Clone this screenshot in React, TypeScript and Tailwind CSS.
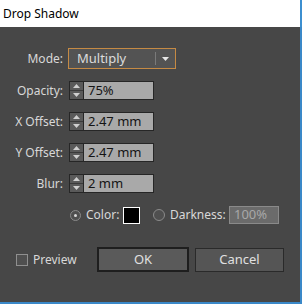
import React from 'react';

const font = { fontFamily: '"Segoe UI", "Noto Sans", "DejaVu Sans", sans-serif' };

function Spinner() {
  return (
    <div className="w-[15px] h-full flex flex-col border border-[#262626] bg-[#5a5a5a]">
      <div className="flex-1 flex items-center justify-center border-b border-[#3a3a3a]">
        <svg width="7" height="4" viewBox="0 0 7 4"><path d="M0 4 L3.5 0 L7 4 Z" fill="#cfcfcf" /></svg>
      </div>
      <div className="flex-1 flex items-center justify-center">
        <svg width="7" height="4" viewBox="0 0 7 4"><path d="M0 0 L3.5 4 L7 0 Z" fill="#cfcfcf" /></svg>
      </div>
    </div>
  );
}

function FieldRow({ label, value }: { label: string; value: string }) {
  return (
    <div className="flex items-center h-[19px]">
      <div className="w-[64px] text-right text-[12px] text-[#d8d8d8] pr-[1px]">{label}</div>
      <div className="ml-[5px] flex h-[19px]">
        <Spinner />
        <div className="w-[70px] h-full bg-[#a9a9a9] border border-[#262626] border-l-0 pl-[4px] flex items-center text-[13px] text-[#141414]">
          {value}
        </div>
      </div>
    </div>
  );
}

export default function App() {
  return (
    <div className="w-[303px] h-[305px] bg-white flex flex-col" style={font}>
      {/* Title bar */}
      <div className="h-[27px] flex items-center pl-[3px] text-[12px] text-black border-r-2 border-[#3c8fd0] mr-[1px]">
        Drop Shadow
      </div>

      {/* Body */}
      <div className="flex-1 bg-[#474747] border-r-2 border-b-2 border-[#3a88c8] mr-[1px] mb-[1px] flex flex-col">
        {/* Mode */}
        <div className="flex items-center mt-[21px] h-[21px]">
          <div className="w-[64px] text-right text-[12px] text-[#d8d8d8] pr-[1px]">Mode:</div>
          <div className="ml-[4px] w-[108px] h-[21px] border border-[#c58a44] bg-[#535353] flex items-center">
            <div className="flex-1 pl-[8px] text-[13px] text-[#dcdcdc]">Multiply</div>
            <div className="w-px h-[13px] bg-[#7a7a7a]" />
            <div className="w-[19px] flex items-center justify-center">
              <svg width="7" height="4" viewBox="0 0 7 4"><path d="M0 0 L7 0 L3.5 4 Z" fill="#e6e6e6" /></svg>
            </div>
          </div>
        </div>

        <div className="mt-[12px] flex flex-col gap-[12px]">
          <FieldRow label="Opacity:" value="75%" />
          <FieldRow label="X Offset:" value="2.47 mm" />
          <FieldRow label="Y Offset:" value="2.47 mm" />
          <FieldRow label="Blur:" value="2 mm" />
        </div>

        {/* Color / Darkness */}
        <div className="flex items-center mt-[13px] h-[18px] pl-[70px]">
          <div className="w-[11px] h-[11px] rounded-full border border-[#8a8a8a] bg-[#4f4f4f] flex items-center justify-center">
            <div className="w-[3px] h-[3px] rounded-full bg-[#d8d8d8]" />
          </div>
          <div className="ml-[5px] w-[32px] text-[12px] text-[#d8d8d8]">Color:</div>
          <div className="ml-[5px] w-[17px] h-[17px] border border-white bg-black" />
          <div className="ml-[13px] w-[12px] h-[12px] rounded-full border border-[#8a8a8a] bg-[#4f4f4f]" />
          <div className="ml-[5px] w-[54px] text-[12px] text-[#d8d8d8]">Darkness:</div>
          <div className="ml-[5px] w-[50px] h-[18px] border border-[#8a8a8a] bg-[#6b6b6b] pl-[4px] flex items-center text-[13px] text-[#a8a8a8]">
            100%
          </div>
        </div>

        {/* Bottom */}
        <div className="flex items-center mt-[23px] pl-[16px]">
          <div className="w-[81px] flex items-center">
            <div className="w-[12px] h-[12px] border border-[#8f8f8f] bg-[#4f4f4f]" />
            <div className="ml-[5px] text-[12px] text-[#d8d8d8]">Preview</div>
          </div>
          <div className="w-[92px] h-[25px] border-2 border-[#1e1e1e] bg-[#5a5a5a] flex items-center justify-center text-[13px] text-[#e0e0e0]">
            OK
          </div>
          <div className="ml-[6px] w-[89px] h-[24px] border border-[#2a2a2a] bg-[#555555] flex items-center justify-center text-[13px] text-[#e0e0e0]">
            Cancel
          </div>
        </div>
      </div>
    </div>
  );
}
